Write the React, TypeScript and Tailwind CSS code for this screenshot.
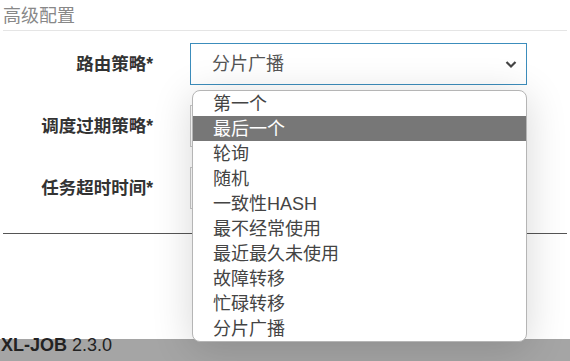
import { useState } from 'react'

const options = [
  '第一个',
  '最后一个',
  '轮询',
  '随机',
  '一致性HASH',
  '最不经常使用',
  '最近最久未使用',
  '故障转移',
  '忙碌转移',
  '分片广播',
]

function Row({ label, children }: { label: string; children: React.ReactNode }) {
  return (
    <div className="flex items-center h-[42px]">
      <div className="w-[153px] text-right text-[17.5px] font-bold text-[#333]">{label}</div>
      <div className="ml-[37px] w-[337px] h-full">{children}</div>
    </div>
  )
}

export default function App() {
  const [active] = useState(1)

  return (
    <div className="w-[570px] h-[361px] overflow-hidden bg-white flex flex-col font-['Liberation_Sans','Noto_Sans_CJK_SC',sans-serif]">
      <div className="relative flex-1">
        <div className="mx-[3px] pt-[4px] h-[31px] border-b border-[#e5e5e5] text-[18px] leading-[24px] text-[#888]">
          高级配置
        </div>

        <div className="mt-[12px] flex flex-col gap-[20px]">
          <Row label="路由策略*">
            <div className="h-full border border-[#3c8dbc] flex items-center justify-between pl-[21px] pr-[8px] text-[18px] text-[#555]">
              <span>分片广播</span>
              <svg width="14" height="14" viewBox="0 0 14 14" fill="none">
                <path d="M2.5 5l4.5 4.5L11.5 5" stroke="#444" strokeWidth="2.2" />
              </svg>
            </div>
          </Row>
          <Row label="调度过期策略*">
            <div className="h-full border border-[#c8c8c8]" />
          </Row>
          <Row label="任务超时时间*">
            <div className="h-full border border-[#c8c8c8]" />
          </Row>
        </div>

        <div className="mx-[3px] mt-[24px] border-t border-[#555]" />

        {/* open select menu */}
        <ul className="absolute left-[192px] top-[90px] w-[335px] rounded-[8px] border border-[#b5b5b5] bg-white overflow-hidden shadow-[0_6px_40px_rgba(0,0,0,0.16)]">
          {options.map((o, i) => (
            <li
              key={o}
              className={
                i === active
                  ? 'h-[25px] px-[20px] pt-[1px] text-[18px] leading-[25px] bg-[#777] text-white'
                  : 'h-[25px] px-[20px] pt-[1px] text-[18px] leading-[25px] text-[#444]'
              }
            >
              {o}
            </li>
          ))}
        </ul>
      </div>

      <div className="h-[22px] bg-[#a5a5a5] shrink-0">
        <div className="-mt-[4px] ml-[1px] text-[18px] leading-[20px] text-[#222]">
          <b>XL-JOB</b> 2.3.0
        </div>
      </div>
    </div>
  )
}
